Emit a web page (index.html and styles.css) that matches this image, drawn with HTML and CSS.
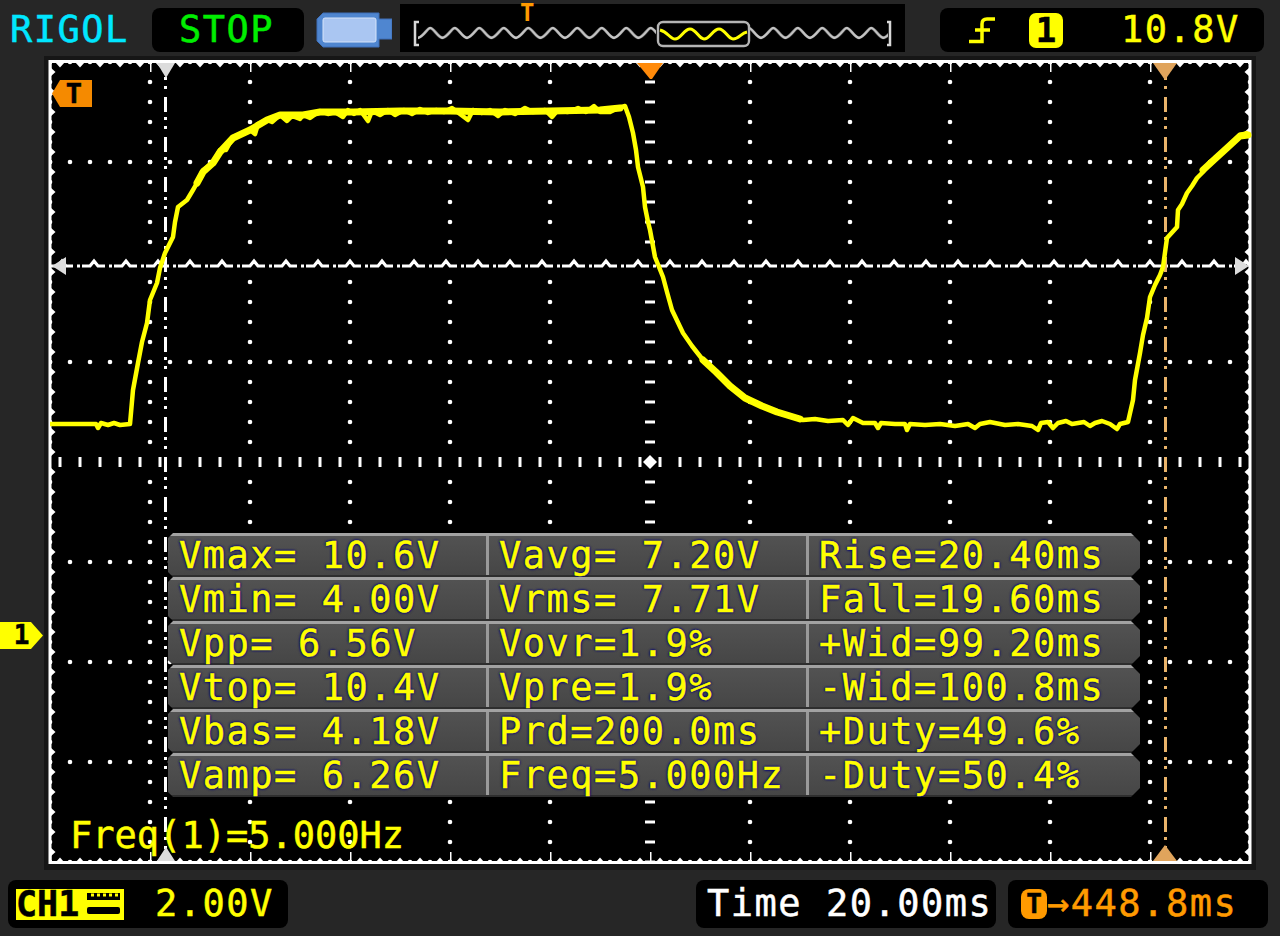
FILE: index.html
```html
<!DOCTYPE html>
<html lang="en">
<head>
<meta charset="utf-8">
<title>RIGOL</title>
<link rel="stylesheet" href="styles.css">
</head>
<body>
<div class="scope">
  <header class="topbar">
    <div class="logo t">RIGOL</div>
    <div class="pill stop t">STOP</div>
    <svg class="battery" width="76" height="36" viewBox="0 0 76 36">
      <path d="M7 1H63V7H76V27H63V35H7L1 29V7Z" fill="#4f86d0" stroke="#3f6fb8"/>
      <rect x="7" y="6" width="53" height="24" rx="2" fill="#aac6f2" stroke="#d6e4fa"/>
    </svg>
    <div class="nav">
      <span class="nav-t">T</span>
      <svg class="nav-wave" width="505" height="48" viewBox="400 4 505 48">
        <defs>
          <pattern id="zig" x="418" y="24" width="24.5" height="18" patternUnits="userSpaceOnUse">
            <path d="M-1 14C5 14 9 4 12.250 4C16 4 20 14 25.500 14" fill="none" stroke="#c4c4c4" stroke-width="2.600"/>
          </pattern>
        </defs>
        <rect x="418" y="24" width="470" height="18" fill="url(#zig)"/>
        <path d="M419 22H415V45H419M887 22H890V45H887" fill="none" stroke="#d8d8d8" stroke-width="2.500"/>
        <rect x="656" y="20" width="94" height="26" rx="5" fill="#000"/>
        <rect x="658" y="22" width="91" height="24" rx="5" fill="none" stroke="#b4b4b4" stroke-width="2.400"/>
        <path d="M660 30C668 32 670 39 675 39C681 39 684 29 690 29C696 29 699 39 704 39C710 39 713 29 719 29C725 29 728 39 733 39C739 39 741 33 747 32" fill="none" stroke="#ffff00" stroke-width="3"/>
      </svg>
    </div>
    <div class="pill trig">
      <svg class="edge" width="28" height="28" viewBox="0 0 28 28">
        <path d="M1 25.500H14V8Q14 3 19 3H27" fill="none" stroke="#ffff00" stroke-width="3.500"/>
        <path d="M7 14H22" stroke="#ffff00" stroke-width="3.500"/>
      </svg>
      <span class="badge t">1</span>
      <span class="t level">10.8V</span>
    </div>
  </header>

  <main class="plot-wrap">
    <svg class="plot" width="1212" height="814" viewBox="44 56 1212 814">
      <defs>
        <pattern id="cols" x="40" y="52" width="100" height="20" patternUnits="userSpaceOnUse"><circle cx="10" cy="10" r="2.300" fill="#fff"/></pattern>
        <pattern id="rows" x="40" y="52" width="20" height="100" patternUnits="userSpaceOnUse"><circle cx="10" cy="10" r="2.300" fill="#fff"/></pattern>
        <pattern id="ticks" x="50" y="456" width="20" height="12" patternUnits="userSpaceOnUse"><rect x="8.500" y="1" width="3" height="10" fill="#fff"/></pattern>
        <pattern id="dash" x="644" y="52" width="12" height="20" patternUnits="userSpaceOnUse"><rect x="1" y="8.500" width="10" height="3" fill="#fff"/></pattern>
        <pattern id="lvl" x="50" y="258" width="32" height="12" patternUnits="userSpaceOnUse"><path d="M0 8H8L12 3 16 8H23M27 8H30" fill="none" stroke="#fff" stroke-width="3.200"/></pattern>
        <pattern id="bt" x="50" y="62" width="20" height="8" patternUnits="userSpaceOnUse"><path d="M5 0H15L10 5.500Z" fill="#fff"/></pattern>
        <pattern id="bb" x="50" y="855" width="20" height="8" patternUnits="userSpaceOnUse"><path d="M5 8H15L10 2.500Z" fill="#fff"/></pattern>
        <pattern id="bl" x="50" y="62" width="8" height="20" patternUnits="userSpaceOnUse"><path d="M0 5V15L5.500 10Z" fill="#fff"/></pattern>
        <pattern id="br" x="1242" y="62" width="8" height="20" patternUnits="userSpaceOnUse"><path d="M8 5V15L2.500 10Z" fill="#fff"/></pattern>
        <pattern id="mt" x="50" y="62" width="100" height="10" patternUnits="userSpaceOnUse"><rect x="-1" width="2.500" height="10" fill="#fff"/></pattern>
        <pattern id="mb" x="50" y="852" width="100" height="10" patternUnits="userSpaceOnUse"><rect x="-1" width="2.500" height="10" fill="#fff"/></pattern>
      </defs>
      <rect x="44" y="56" width="1212" height="814" fill="#161616"/>
      <rect x="50" y="62" width="1200" height="800" fill="#000"/>
      <rect x="50" y="62" width="1200" height="800" fill="url(#cols)"/>
      <rect x="50" y="62" width="1200" height="800" fill="url(#rows)"/>
      <rect x="640" y="62" width="20" height="800" fill="#000"/>
      <rect x="644" y="62" width="12" height="800" fill="url(#dash)"/>
      <rect x="50" y="256" width="1200" height="14" fill="#000"/>
      <rect x="50" y="258" width="1200" height="12" fill="url(#lvl)"/>
      <rect x="50" y="454" width="1200" height="16" fill="#000"/>
      <rect x="50" y="456" width="1200" height="12" fill="url(#ticks)"/>
      <path d="M650 455L657 462 650 469 643 462Z" fill="#fff"/>
      <path d="M165.500 62V862" stroke="#fff" stroke-width="3" stroke-dasharray="15 5 3 6 3 8" stroke-dashoffset="-35"/>
      <path d="M1165.500 62V862" stroke="#e9b36a" stroke-width="3" stroke-dasharray="15 5 3 6 3 8" stroke-dashoffset="-35"/>
      <rect x="50" y="62" width="1200" height="8" fill="url(#bt)"/>
      <rect x="50" y="855" width="1200" height="8" fill="url(#bb)"/>
      <rect x="50" y="62" width="8" height="800" fill="url(#bl)"/>
      <rect x="1242" y="62" width="8" height="800" fill="url(#br)"/>
      <rect x="50" y="62" width="1200" height="10" fill="url(#mt)"/>
      <rect x="50" y="852" width="1200" height="10" fill="url(#mb)"/>
      <rect x="50" y="61.500" width="1200" height="801" fill="none" stroke="#fff" stroke-width="3"/>
      <path d="M52 266L66 257V275Z" fill="#dcdcdc"/>
      <path d="M1249 266L1235 257V275Z" fill="#dcdcdc"/>
      <path d="M157 63H175L166 78Z" fill="#dcdcdc"/>
      <path d="M157 861H175L166 847Z" fill="#dcdcdc"/>
      <path d="M637 63H663L652 79H650Z" fill="#ff8a0a"/>
      <path d="M1153 63H1177L1165 80Z" fill="#e0a45c"/>
      <path d="M1153 861H1177L1165 845Z" fill="#e0a45c"/>
      <polyline class="trace" points="50,424 70,424 96,424 98,428 101,423 108,425 114,423 120,425 130,424 133,390 138,363 142,342 147,323 150,300 157,283 160,268 165,253 173,237 175,222 178,207 187,200 193,190 197,183 203,170 213,163 220,150 226,150 233,137 240,134 250,130 255,134 258,124 267,120 272,122 280,115 287,121 292,116 300,119 303,115 310,118 320,111 328,114 335,112 343,117 348,110 354,114 360,110 368,121 372,111 380,115 388,110 395,115 404,110 412,114 420,109 428,113 436,110 444,112 452,108 460,114 468,120 473,110 482,113 490,110 498,116 505,110 515,114 525,108 533,112 545,110 552,117 557,111 568,112 578,108 586,112 594,106 600,112 610,112 618,108 625,106 629,117 633,133 636,150 638,167 643,187 645,207 648,222 650,230 655,257 663,277 667,292 672,310 683,333 692,346 703,360 716,372 730,385 740,394 750,400 762,406 777,412 790,416 803,420 815,419 828,421 843,420 848,425 853,418 863,423 875,423 878,428 881,423 895,424 905,424 907,430 910,424 925,425 940,424 955,426 968,424 975,428 980,424 990,422 1005,425 1018,424 1032,426 1038,430 1041,423 1048,422 1053,428 1058,423 1066,421 1072,424 1084,422 1090,426 1095,423 1102,421 1110,424 1117,429 1120,424 1128,422 1133,400 1135,380 1140,353 1143,335 1147,318 1150,297 1155,285 1160,275 1163,267 1167,238 1177,227 1178,210 1182,204 1187,193 1192,186 1197,178 1203,172 1210,162 1216,158 1220,154 1227,148 1234,141 1240,135 1248,133"/>
      <polyline class="trace-thick" points="197,183 203,172 213,163 220,152 233,138 250,130 267,120 280,115 303,115 320,112 353,112 400,111 450,111 500,112 550,111 600,110 620,108"/>
      <polyline class="trace-thick" points="703,360 716,372 730,386 745,398 762,406 777,412 800,419"/>
      <polyline class="trace-thick" points="1203,170 1216,158 1227,148 1240,136 1248,135"/>
    </svg>

    <div class="ch-marker t">1</div>
    <div class="t-marker t">T</div>

    <section class="panel">
      <div class="row"><div class="cell t">Vmax= 10.6V</div><div class="cell t">Vavg= 7.20V</div><div class="cell t">Rise=20.40ms</div></div>
      <div class="row"><div class="cell t">Vmin= 4.00V</div><div class="cell t">Vrms= 7.71V</div><div class="cell t">Fall=19.60ms</div></div>
      <div class="row"><div class="cell t">Vpp= 6.56V</div><div class="cell t">Vovr=1.9%</div><div class="cell t">+Wid=99.20ms</div></div>
      <div class="row"><div class="cell t">Vtop= 10.4V</div><div class="cell t">Vpre=1.9%</div><div class="cell t">-Wid=100.8ms</div></div>
      <div class="row"><div class="cell t">Vbas= 4.18V</div><div class="cell t">Prd=200.0ms</div><div class="cell t">+Duty=49.6%</div></div>
      <div class="row"><div class="cell t">Vamp= 6.26V</div><div class="cell t">Freq=5.000Hz</div><div class="cell t">-Duty=50.4%</div></div>
    </section>

    <div class="freq t">Freq(1)=5.000Hz</div>
  </main>

  <footer class="bottombar">
    <div class="pill ch">
      <span class="ch-tag t">CH1</span><svg class="ch-icon" width="40" height="31" viewBox="0 0 40 31">
        <rect width="40" height="31" fill="#ffff00"/>
        <path d="M3 4H36V11H3Z" fill="#000"/>
        <path d="M7 6H10M13 6H16M19 6H22M25 6H28M31 6H34" stroke="#ffff00" stroke-width="3"/>
        <rect x="3" y="18" width="33" height="7" rx="2" fill="#000"/>
      </svg>
      <span class="t vdiv">2.00V</span>
    </div>
    <div class="pill time t">Time 20.00ms</div>
    <div class="pill delay">
      <span class="delay-t t">T</span><span class="t delay-v">→448.8ms</span>
    </div>
  </footer>
</div>
</body>
</html>
```
FILE: styles.css
```css
* { box-sizing: border-box; }
html, body { margin: 0; padding: 0; }
body { background: #262626; width: 1280px; height: 936px; overflow: hidden; }
.scope { display: flex; flex-direction: column; width: 1280px; height: 936px; }

.t {
  font-family: "DejaVu Sans Mono", monospace;
  font-size: 37px;
  letter-spacing: 1.5px;
  line-height: 44px;
  white-space: pre;
  -webkit-text-stroke: 0.5px currentColor;
}

.topbar { display: flex; align-items: flex-start; height: 56px; }
.logo { width: 152px; padding: 8px 0 0 10px; color: #00e6ff; }
.pill { background: #000; border-radius: 8px; height: 44px; margin-top: 8px; display: flex; align-items: center; }
.stop { width: 152px; padding-left: 27px; color: #00ee00; }
.battery { margin: 12px 0 0 12px; flex: none; }
.nav { position: relative; width: 505px; height: 48px; margin: 4px 0 0 8px; background: #000; }
.nav-wave { display: block; }
.nav-t {
  position: absolute; left: 120px; top: -5px; color: #ff9a00;
  font: bold 24px/28px "DejaVu Sans Mono", monospace;
}
.trig { width: 324px; margin-left: 35px; padding-left: 28px; }
.edge { flex: none; }
.badge {
  width: 34px; height: 35px; margin-left: 33px; background: #ffff00; color: #000;
  border-radius: 7px; text-align: center; line-height: 35px; letter-spacing: 0; font-weight: bold;
  font-size: 34px;
}
.level { margin-left: 58px; color: #ffff00; }

.plot-wrap { position: relative; height: 814px; padding-left: 44px; }
.plot { display: block; }
.trace { fill: none; stroke: #ffff00; stroke-width: 4.5; stroke-linejoin: round; }
.trace-thick { fill: none; stroke: #ffff00; stroke-width: 7; stroke-linejoin: round; stroke-linecap: round; }

.ch-marker {
  position: absolute; left: 0; top: 566px; width: 43px; height: 27px;
  background: #ffff00; color: #000; text-align: center; font-weight: bold; font-size: 26px; line-height: 27px; letter-spacing: 0;
  clip-path: polygon(0 0, 72% 0, 100% 50%, 72% 100%, 0 100%);
}
.t-marker {
  position: absolute; left: 52px; top: 24px; width: 40px; height: 27px;
  background: #f58a00; color: #000; text-align: center; font-weight: bold; font-size: 27px; line-height: 27px; letter-spacing: 0; padding-left: 4px;
  clip-path: polygon(0 50%, 20% 0, 100% 0, 100% 100%, 20% 100%);
}

.panel { position: absolute; left: 168px; top: 477px; width: 972px; }
.row {
  display: flex; height: 44px;
  background: linear-gradient(#525252, #464646);
  border-top: 3px solid #a2a2a2;
  border-bottom: 2px solid #2e2e2e;
  clip-path: polygon(5px 0, calc(100% - 9px) 0, 100% 9px, 100% calc(100% - 9px), calc(100% - 9px) 100%, 5px 100%, 0 calc(100% - 5px), 0 5px);
}
.cell { color: #ffff00; line-height: 39px; text-shadow: 0 0 2px #00007a, 0 0 3px #00007a, 0 0 3px #00007a; }
.cell:nth-child(1) { width: 318px; padding-left: 11px; }
.cell:nth-child(2) { width: 320px; padding-left: 10px; border-left: 3px solid #9a9a9a; }
.cell:nth-child(3) { flex: 1; padding-left: 10px; border-left: 3px solid #9a9a9a; }

.freq { position: absolute; left: 70px; top: 758px; color: #ffff00; letter-spacing: 0; }

.bottombar { display: flex; align-items: flex-start; height: 66px; }
.bottombar .pill { height: 48px; margin-top: 10px; }
.ch { width: 280px; margin-left: 8px; padding-left: 8px; }
.ch-tag { background: #ffff00; color: #000; width: 68px; height: 31px; line-height: 31px; letter-spacing: 0; font-size: 35px; font-weight: bold; flex: none; }
.ch-icon { flex: none; }
.vdiv { margin-left: 31px; color: #ffff00; }
.time { width: 300px; margin-left: 408px; padding-left: 11px; color: #fff; }
.delay { width: 260px; margin-left: 12px; padding-left: 13px; color: #ff9a00; }
.delay-t { width: 26px; height: 30px; line-height: 30px; background: #ff9a00; color: #000; border-radius: 8px; text-align: center; font-weight: bold; font-size: 26px; letter-spacing: 0; flex: none; }
.delay-v { color: #ff9a00; }
```
